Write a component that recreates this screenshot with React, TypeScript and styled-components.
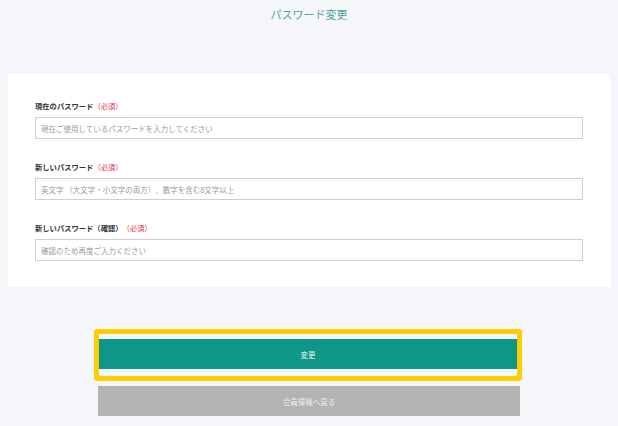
import styled, { createGlobalStyle } from "styled-components";

const GlobalStyle = createGlobalStyle`
  html, body {
    margin: 0;
    background: #f5f6fa;
  }
  body {
    font-family: "Noto Sans CJK JP", "Noto Sans", sans-serif;
    text-spacing-trim: space-all;
  }
  input {
    text-spacing-trim: space-all;
  }
`;

export default function App() {
  return (
    <>
      <GlobalStyle />
      <Page>
        <Title>パスワード変更</Title>
        <Card>
          <Field>
            <Label>
              現在のパスワード<Required>（必須）</Required>
            </Label>
            <Input type="password" placeholder="現在ご使用しているパスワードを入力してください" />
          </Field>
          <Field>
            <Label>
              新しいパスワード<Required>（必須）</Required>
            </Label>
            <Input type="password" placeholder="英文字 （大文字・小文字の両方）、数字を含む8文字以上" />
          </Field>
          <Field>
            <Label>
              新しいパスワード（確認）<Required>（必須）</Required>
            </Label>
            <Input type="password" placeholder="確認のため再度ご入力ください" />
          </Field>
        </Card>
        <Buttons>
          <Highlight>
            <Button $variant="primary">変更</Button>
          </Highlight>
          <Button $variant="back">会員情報へ戻る</Button>
        </Buttons>
      </Page>
    </>
  );
}

const Page = styled.div`
  padding: 6px 8px 10px;
  min-height: 426px;
  box-sizing: border-box;
`;

const Title = styled.h1`
  margin: 0;
  height: 16px;
  line-height: 16px;
  text-align: center;
  font-size: 11px;
  font-weight: 400;
  color: #4aa59e;
`;

const Card = styled.div`
  margin-top: 52px;
  background: #fff;
  padding: 26px 27px 26px 27px;
  display: flex;
  flex-direction: column;
  gap: 22px;
`;

const Field = styled.div`
  display: flex;
  flex-direction: column;
  gap: 5px;
`;

const Label = styled.label`
  font-size: 7.3px;
  line-height: 12px;
  font-weight: 700;
  color: #333;
`;

const Required = styled.span`
  font-weight: 400;
  color: #e0363d;
`;

const Input = styled.input`
  box-sizing: border-box;
  height: 22px;
  width: 100%;
  margin: 0;
  padding: 0 5px;
  border: 1px solid #cfcfcf;
  border-radius: 0;
  background: #fff;
  font-family: inherit;
  font-size: 7.5px;
  outline: none;
  &::placeholder {
    color: #9a9a9a;
  }
`;

const Buttons = styled.div`
  width: 422px;
  margin: 42px auto 0;
  display: flex;
  flex-direction: column;
  gap: 5px;
`;

const Highlight = styled.div`
  margin: 0 -2px 0 -4px;
  border: 5px solid #ffcc00;
  border-radius: 3px;
  padding: 5px 0 7px;
`;

const Button = styled.button<{ $variant: "primary" | "back" }>`
  display: block;
  width: 100%;
  height: 30px;
  border: none;
  margin: 0;
  font-family: inherit;
  font-size: 7.5px;
  cursor: pointer;
  background: ${(p) => (p.$variant === "primary" ? "#0e9688" : "#b3b3b3")};
  color: ${(p) => (p.$variant === "primary" ? "#e6f4f2" : "#ececec")};
`;
